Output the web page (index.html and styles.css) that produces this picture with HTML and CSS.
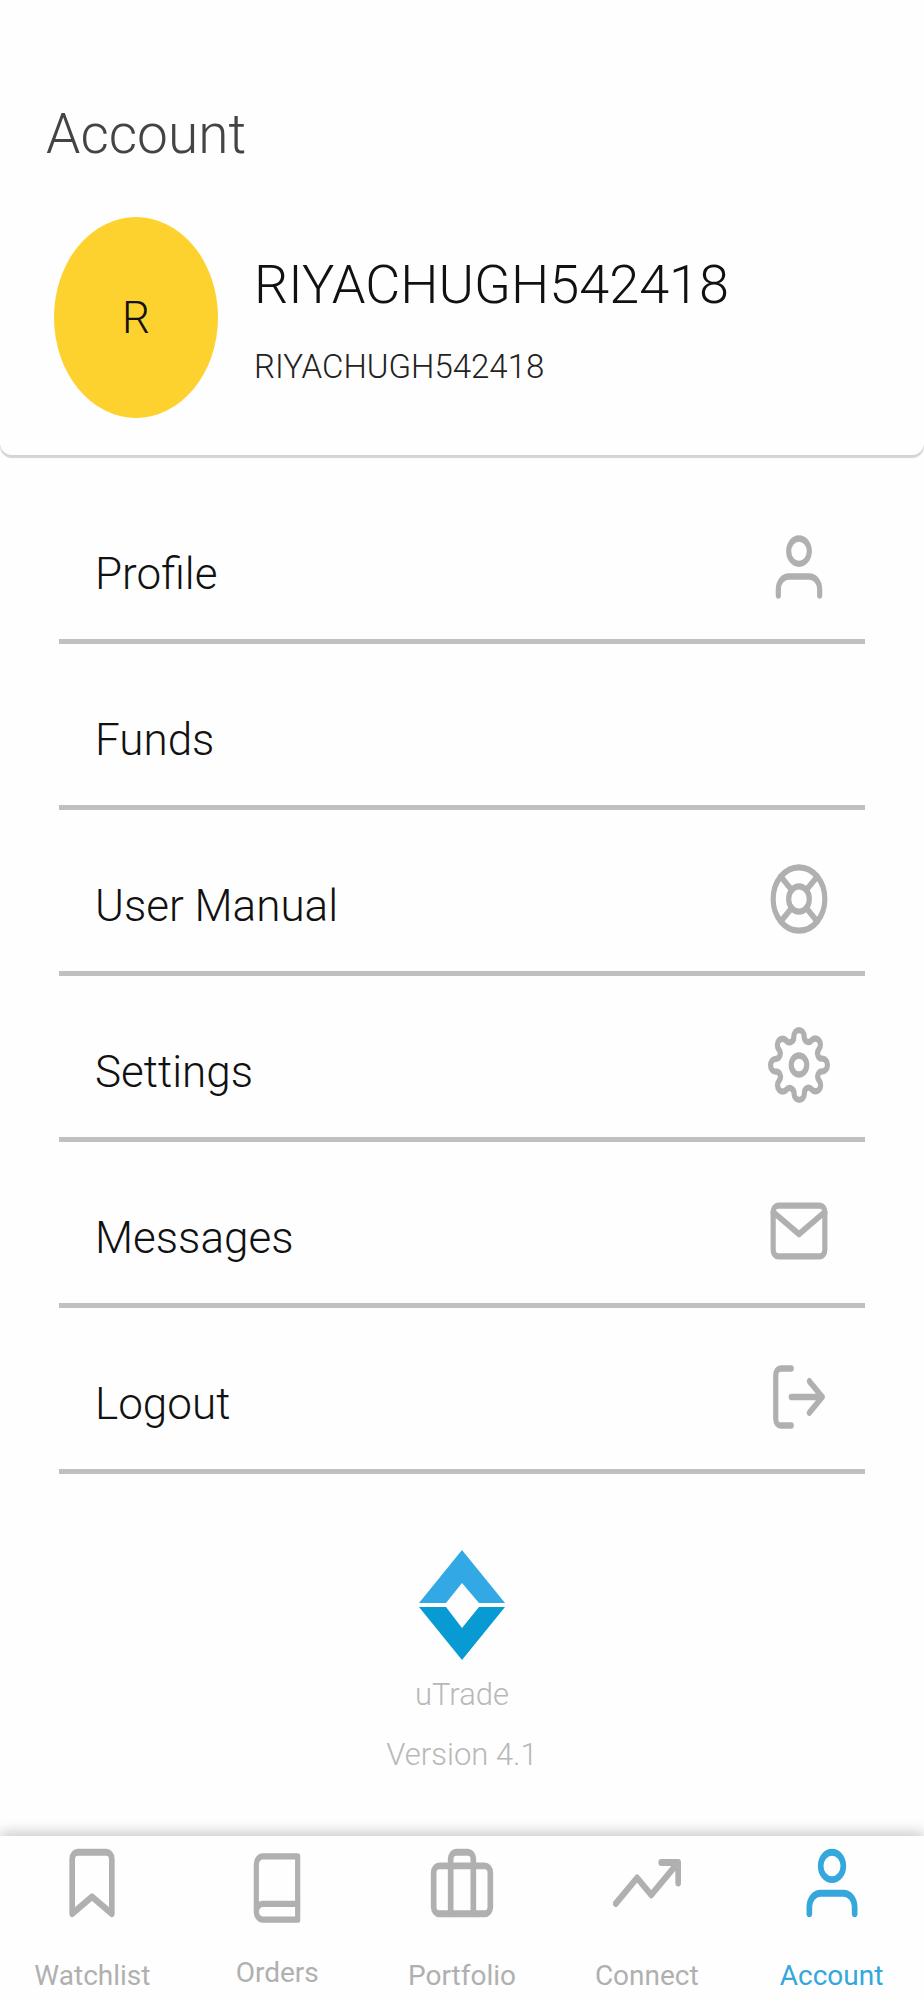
FILE: index.html
```html
<!DOCTYPE html>
<html lang="en">
<head>
<meta charset="utf-8">
<meta name="viewport" content="width=device-width, initial-scale=1">
<title>Account</title>
<link rel="stylesheet" href="styles.css">
</head>
<body>
<div class="screen">
  <header class="page-header">
    <h1 class="page-title">Account</h1>
  </header>

  <section class="user-card">
    <div class="avatar">R</div>
    <div class="user-text">
      <h2 class="user-name">RIYACHUGH542418</h2>
      <p class="user-id">RIYACHUGH542418</p>
    </div>
  </section>

  <main class="content">
    <nav class="menu" aria-label="Account menu">
      <a class="menu-row" href="#profile">
        <span class="menu-label">Profile</span>
        <svg class="icon" viewBox="0 0 24 24" preserveAspectRatio="none" aria-hidden="true"><circle cx="12" cy="7" r="4"/><path d="M20 21v-2a4 4 0 0 0-4-4H8a4 4 0 0 0-4 4v2"/></svg>
      </a>
      <a class="menu-row" href="#funds">
        <span class="menu-label">Funds</span>
      </a>
      <a class="menu-row" href="#manual">
        <span class="menu-label">User Manual</span>
        <svg class="icon" viewBox="0 0 24 24" preserveAspectRatio="none" aria-hidden="true"><circle cx="12" cy="12" r="10"/><circle cx="12" cy="12" r="4"/><path d="M4.93 4.93l4.24 4.24M14.83 14.83l4.24 4.24M14.83 9.17l4.24-4.24M4.93 19.07l4.24-4.24"/></svg>
      </a>
      <a class="menu-row" href="#settings">
        <span class="menu-label">Settings</span>
        <svg class="icon" viewBox="0 0 24 24" preserveAspectRatio="none" aria-hidden="true"><circle cx="12" cy="12" r="3"/><path d="M19.4 15a1.65 1.65 0 0 0 .33 1.82l.06.06a2 2 0 0 1 0 2.83 2 2 0 0 1-2.83 0l-.06-.06a1.65 1.65 0 0 0-1.82-.33 1.65 1.65 0 0 0-1 1.51V21a2 2 0 0 1-2 2 2 2 0 0 1-2-2v-.09A1.65 1.65 0 0 0 9 19.4a1.65 1.65 0 0 0-1.82.33l-.06.06a2 2 0 0 1-2.83 0 2 2 0 0 1 0-2.83l.06-.06a1.65 1.65 0 0 0 .33-1.82 1.65 1.65 0 0 0-1.51-1H3a2 2 0 0 1-2-2 2 2 0 0 1 2-2h.09A1.65 1.65 0 0 0 4.6 9a1.65 1.65 0 0 0-.33-1.82l-.06-.06a2 2 0 0 1 0-2.83 2 2 0 0 1 2.83 0l.06.06a1.65 1.65 0 0 0 1.82.33H9a1.65 1.65 0 0 0 1-1.51V3a2 2 0 0 1 2-2 2 2 0 0 1 2 2v.09a1.65 1.65 0 0 0 1 1.51 1.65 1.65 0 0 0 1.82-.33l.06-.06a2 2 0 0 1 2.83 0 2 2 0 0 1 0 2.83l-.06.06a1.65 1.65 0 0 0-.33 1.82V9a1.65 1.65 0 0 0 1.51 1H21a2 2 0 0 1 2 2 2 2 0 0 1-2 2h-.09a1.65 1.65 0 0 0-1.51 1z"/></svg>
      </a>
      <a class="menu-row" href="#messages">
        <span class="menu-label">Messages</span>
        <svg class="icon" viewBox="0 0 24 24" preserveAspectRatio="none" aria-hidden="true"><rect x="2" y="4" width="20" height="16" rx="2"/><path d="M22 6l-10 7L2 6"/></svg>
      </a>
      <a class="menu-row" href="#logout">
        <span class="menu-label">Logout</span>
        <svg class="icon" viewBox="0 0 24 24" preserveAspectRatio="none" aria-hidden="true"><path d="M9 21H5a2 2 0 0 1-2-2V5a2 2 0 0 1 2-2h4M16 17l5-5-5-5M21 12H9"/></svg>
      </a>
    </nav>

    <div class="brand">
      <svg class="brand-logo" viewBox="0 0 86 110" aria-hidden="true"><path fill="#32a9e4" d="M43 0L86 53H60L43 33 27 53H0z"/><path fill="#089ad2" d="M0 57H27L43 78 60 57H86L43 110z"/></svg>
      <p class="brand-text">uTrade</p>
      <p class="brand-text">Version 4.1</p>
    </div>
  </main>

  <nav class="tab-bar" aria-label="Main">
    <a class="tab" href="#watchlist">
      <svg class="icon tab-icon" viewBox="0 0 24 24" preserveAspectRatio="none" aria-hidden="true"><path d="M19 21l-7-5-7 5V5a2 2 0 0 1 2-2h10a2 2 0 0 1 2 2z"/></svg>
      <span>Watchlist</span>
    </a>
    <a class="tab tab-orders" href="#orders">
      <svg class="icon" viewBox="0 0 24 24" preserveAspectRatio="none" aria-hidden="true"><path d="M4 19.5A2.5 2.5 0 0 1 6.5 17H20"/><path d="M6.5 2H20v20H6.5A2.5 2.5 0 0 1 4 19.5v-15A2.5 2.5 0 0 1 6.5 2z"/></svg>
      <span>Orders</span>
    </a>
    <a class="tab" href="#portfolio">
      <svg class="icon tab-icon" viewBox="0 0 24 24" preserveAspectRatio="none" aria-hidden="true"><rect x="2" y="7" width="20" height="14" rx="2"/><path d="M16 21V5a2 2 0 0 0-2-2h-4a2 2 0 0 0-2 2v16"/></svg>
      <span>Portfolio</span>
    </a>
    <a class="tab" href="#connect">
      <svg class="icon tab-icon" viewBox="0 0 24 24" preserveAspectRatio="none" aria-hidden="true"><path d="M23 6l-9.5 9.5-5-5L1 18M17 6h6v6"/></svg>
      <span>Connect</span>
    </a>
    <a class="tab tab-active" href="#account" aria-current="page">
      <svg class="icon tab-icon" viewBox="0 0 24 24" preserveAspectRatio="none" aria-hidden="true"><circle cx="12" cy="7" r="4"/><path d="M20 21v-2a4 4 0 0 0-4-4H8a4 4 0 0 0-4 4v2"/></svg>
      <span>Account</span>
    </a>
  </nav>
</div>
</body>
</html>
```

FILE: styles.css
```css
* {
  box-sizing: border-box;
}

body {
  margin: 0;
  background: #fefefe;
  color: #111;
  font-family: Roboto, "Liberation Sans", sans-serif;
  font-weight: 300;
}

h1, h2, p {
  margin: 0;
  font-weight: 300;
}

a {
  color: inherit;
  text-decoration: none;
}

.screen {
  display: flex;
  flex-direction: column;
  min-height: 100vh;
}

.page-header {
  padding: 98px 46px 38px;
}

.page-title {
  color: #444;
  font-size: 55px;
  line-height: 72px;
}

.user-card {
  display: flex;
  align-items: center;
  gap: 36px;
  padding: 9px 54px 37px;
  border-radius: 12px;
  box-shadow: 0 3px 1px #d4d4d4;
  background: #fefefe;
}

.avatar {
  display: flex;
  flex: none;
  align-items: center;
  justify-content: center;
  width: 164px;
  height: 201px;
  border-radius: 50%;
  background: #fdd22f;
  font-size: 44px;
}

.user-name {
  font-size: 54px;
  line-height: 72px;
}

.user-id {
  padding-top: 26px;
  color: #222;
  font-size: 33px;
  line-height: 40px;
}

.content {
  padding: 23px 59px 0;
}

.menu {
  display: flex;
  flex-direction: column;
}

.menu-row {
  display: flex;
  align-items: center;
  justify-content: space-between;
  height: 166px;
  padding: 16px 35px 0 36px;
  border-bottom: 5px solid #c0c0c0;
}

.menu-label {
  padding-top: 14px;
  font-size: 44px;
  line-height: 56px;
}

.icon {
  width: 62px;
  height: 76px;
  fill: none;
  stroke: #b0b0b0;
  stroke-width: 2;
  stroke-linecap: round;
  stroke-linejoin: round;
}

.brand {
  display: flex;
  flex-direction: column;
  align-items: center;
  padding-top: 76px;
  color: #b8b8b8;
}

.brand-logo {
  width: 86px;
  height: 110px;
  margin-bottom: 5px;
}

.brand-text {
  font-size: 31px;
  line-height: 60px;
}

.tab-bar {
  display: grid;
  grid-template-columns: repeat(5, 1fr);
  margin-top: auto;
  padding: 6px 0 5px;
  background: #fefefe;
  box-shadow: 0 -4px 12px #ccc;
}

.tab {
  display: flex;
  flex-direction: column;
  align-items: center;
  gap: 33px;
  color: #b0b0b0;
  font-size: 28px;
  font-weight: 400;
  line-height: 38px;
}

.tab-icon {
  width: 68px;
  height: 82px;
}

.tab-orders {
  gap: 28px;
  padding-top: 8px;
}

.tab-active {
  color: #34a7dc;
}

.tab-active .icon {
  stroke: #34a7dc;
}
```
